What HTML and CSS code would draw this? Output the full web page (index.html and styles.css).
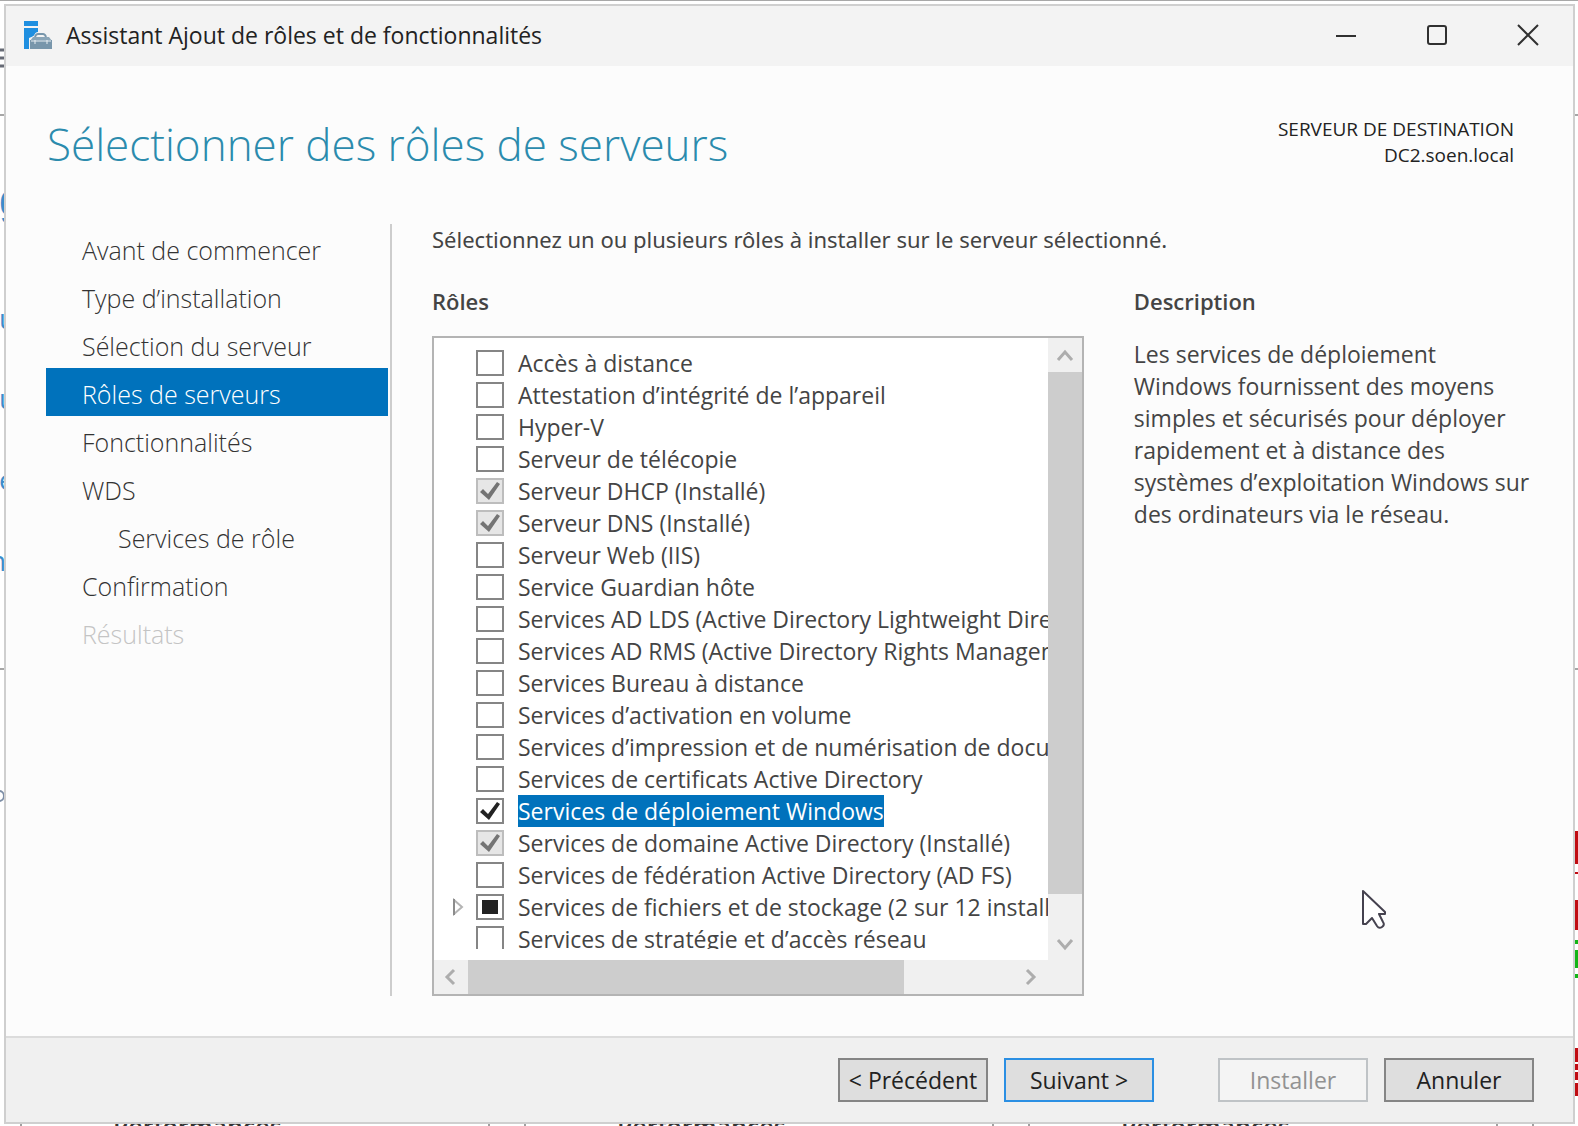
FILE: index.html
```html
<!DOCTYPE html>
<html lang="fr">
<head>
<meta charset="utf-8">
<meta name="viewport" content="width=device-width, initial-scale=1">
<title>Assistant Ajout de rôles et de fonctionnalités</title>
<link rel="stylesheet" href="styles.css">
</head>
<body>
<div class="backdrop" aria-hidden="true">
  <svg class="edge edge-left" width="8" height="820" viewBox="0 0 8 820">
    <path d="M0 50h8M0 58h8M0 66h8" stroke="#666a75" stroke-width="3"/>
    <path d="M0 115h8M0 669h8" stroke="#a6a6a6" stroke-width="2"/>
    <circle cx="-1" cy="796" r="5" fill="none" stroke="#7d8ea6" stroke-width="2"/>
  </svg>
  <span class="peek peek-1">g</span>
  <span class="peek peek-2">u</span>
  <span class="peek peek-3">u</span>
  <span class="peek peek-4">e</span>
  <span class="peek peek-5">n</span>
  <svg class="edge edge-right" width="4" height="1110" viewBox="0 0 4 1110">
    <path d="M0 115h4M0 669h4" stroke="#a6a6a6" stroke-width="2"/>
    <path d="M0 831h4v33H0zM0 872h4v2H0zM0 900h4v30H0zM0 1048h4v14H0zM0 1064h4v6H0zM0 1072h4v8H0zM0 1083h4v13H0z" fill="#c00c12"/>
    <path d="M0 940h4v4H0zM0 950h4v18H0zM0 974h4v4H0z" fill="#13b516"/>
  </svg>
  <div class="tiles">
    <div class="tile">Performances</div>
    <div class="tile">Performances</div>
    <div class="tile">Performances</div>
    <div class="tile"></div>
  </div>
</div>

<div class="window">
  <header class="titlebar">
    <svg class="app-icon" width="30" height="30" viewBox="0 0 30 30">
      <path d="M1 1h14v5H1zM1 8h14v4l-7 6v11H1z" fill="#1f8fe0"/>
      <path d="M6 29V18l5-2q1-4 4-4h5q3 0 4 4l5 2v11z" fill="#f3f3f3"/>
      <path d="M12 17q1-3 3-3h5q2 0 3 3" fill="none" stroke="#7896ab" stroke-width="2"/>
      <path d="M10 17h16l3 4H7z" fill="#8aa5b7"/>
      <path d="M7 20h22v9H7z" fill="#7896ab"/>
      <path d="M8 21h20M12 20v4M24 20v4" fill="none" stroke="#e8eef2" stroke-width="1"/>
    </svg>
    <span class="window-title">Assistant Ajout de rôles et de fonctionnalités</span>
    <div class="window-controls">
      <button type="button" aria-label="Réduire"><svg width="22" height="22" viewBox="0 0 22 22"><path d="M1 12h20"/></svg></button>
      <button type="button" aria-label="Agrandir"><svg width="22" height="22" viewBox="0 0 22 22"><rect x="2" y="2" width="18" height="18" rx="2"/></svg></button>
      <button type="button" aria-label="Fermer"><svg width="22" height="22" viewBox="0 0 22 22"><path d="M1 1l20 20M21 1L1 21"/></svg></button>
    </div>
  </header>

  <div class="page-head">
    <h1>Sélectionner des rôles de serveurs</h1>
    <p class="destination">SERVEUR DE DESTINATION<br>DC2.soen.local</p>
  </div>

  <main class="body">
    <nav class="steps">
      <a href="#">Avant de commencer</a>
      <a href="#">Type d’installation</a>
      <a href="#">Sélection du serveur</a>
      <a href="#" class="current" aria-current="step">Rôles de serveurs</a>
      <a href="#">Fonctionnalités</a>
      <a href="#">WDS</a>
      <a href="#" class="sub">Services de rôle</a>
      <a href="#">Confirmation</a>
      <a class="off" aria-disabled="true">Résultats</a>
    </nav>

    <div class="content">
      <p class="intro">Sélectionnez un ou plusieurs rôles à installer sur le serveur sélectionné.</p>
      <div class="columns">
        <section class="roles">
          <h2>Rôles</h2>
          <div class="listbox">
            <div class="viewport">
              <ul class="tree">
                <li><input type="checkbox" id="r1"><label for="r1">Accès à distance</label></li>
                <li><input type="checkbox" id="r2"><label for="r2">Attestation d’intégrité de l’appareil</label></li>
                <li><input type="checkbox" id="r3"><label for="r3">Hyper-V</label></li>
                <li><input type="checkbox" id="r4"><label for="r4">Serveur de télécopie</label></li>
                <li><input type="checkbox" id="r5" checked disabled><label for="r5">Serveur DHCP (Installé)</label></li>
                <li><input type="checkbox" id="r6" checked disabled><label for="r6">Serveur DNS (Installé)</label></li>
                <li><input type="checkbox" id="r7"><label for="r7">Serveur Web (IIS)</label></li>
                <li><input type="checkbox" id="r8"><label for="r8">Service Guardian hôte</label></li>
                <li><input type="checkbox" id="r9"><label for="r9">Services AD LDS (Active Directory Lightweight Directory Services)</label></li>
                <li><input type="checkbox" id="r10"><label for="r10">Services AD RMS (Active Directory Rights Management Services)</label></li>
                <li><input type="checkbox" id="r11"><label for="r11">Services Bureau à distance</label></li>
                <li><input type="checkbox" id="r12"><label for="r12">Services d’activation en volume</label></li>
                <li><input type="checkbox" id="r13"><label for="r13">Services d’impression et de numérisation de documents</label></li>
                <li><input type="checkbox" id="r14"><label for="r14">Services de certificats Active Directory</label></li>
                <li><input type="checkbox" id="r15" checked><label for="r15" class="selected">Services de déploiement Windows</label></li>
                <li><input type="checkbox" id="r16" checked disabled><label for="r16">Services de domaine Active Directory (Installé)</label></li>
                <li><input type="checkbox" id="r17"><label for="r17">Services de fédération Active Directory (AD FS)</label></li>
                <li class="branch"><svg class="expander" width="12" height="18" viewBox="0 0 12 18"><path d="M2 2l8 7-8 7z" fill="#fff" stroke="#b4b4b4" stroke-width="2"/><path d="M2 1v16" stroke="#8c8c8c" stroke-width="2"/></svg><input type="checkbox" id="r18" class="partial"><label for="r18">Services de fichiers et de stockage (2 sur 12 installés)</label></li>
                <li><input type="checkbox" id="r19"><label for="r19">Services de stratégie et d’accès réseau</label></li>
              </ul>
            </div>
            <div class="scroll-v">
              <svg width="34" height="34" viewBox="0 0 34 34"><path d="M10 22l7-8 7 8"/></svg>
              <span class="thumb"></span>
              <svg width="34" height="34" viewBox="0 0 34 34"><path d="M10 14l7 8 7-8"/></svg>
            </div>
            <div class="scroll-h">
              <svg width="34" height="34" viewBox="0 0 34 34"><path d="M20 10l-7 7 7 7"/></svg>
              <span class="thumb"></span>
              <svg width="34" height="34" viewBox="0 0 34 34"><path d="M13 10l7 7-7 7"/></svg>
            </div>
          </div>
        </section>
        <section class="description">
          <h2>Description</h2>
          <p>Les services de déploiement Windows fournissent des moyens simples et sécurisés pour déployer rapidement et à distance des systèmes d’exploitation Windows sur des ordinateurs via le réseau.</p>
        </section>
      </div>
    </div>
  </main>

  <footer class="actions">
    <button type="button">&lt; Précédent</button>
    <button type="button" class="default">Suivant &gt;</button>
    <button type="button" class="apart" disabled>Installer</button>
    <button type="button">Annuler</button>
  </footer>
</div>

<svg class="pointer" width="28" height="42" viewBox="0 0 28 42" aria-hidden="true">
  <path d="M2 2v33l3 0 6-6 5 8q2 3 5 1t1-5l-4-8h6v-2z" fill="#fff" stroke="#45424f" stroke-width="2" stroke-linejoin="round"/>
</svg>
</body>
</html>
```
FILE: styles.css
```css
* {
  box-sizing: border-box;
}

body {
  margin: 0;
  height: 100vh;
  min-height: 720px;
  padding: 3px 3px 2px 4px;
  border-top: 1px solid #a8a8a8;
  background: #fff;
  color: #444;
  font-family: "Open Sans", "Noto Sans", sans-serif;
  font-size: 23px;
  line-height: 32px;
  position: relative;
  overflow: hidden;
}

h1,
h2,
p,
ul {
  margin: 0;
  padding: 0;
}

button {
  font: inherit;
  color: inherit;
}

/* Parts of the console visible around the dialog */
.backdrop {
  position: absolute;
  inset: -1px 0 0;
  overflow: hidden;
}

.edge {
  position: absolute;
  top: 0;
}

.edge-left {
  left: 0;
}

.edge-right {
  right: 0;
}

.peek {
  position: absolute;
  left: -1px;
  color: #3b8ccb;
  font-size: 28px;
  line-height: 40px;
}

.peek-1 {
  top: 180px;
  font-family: "Liberation Sans", sans-serif;
  font-size: 44px;
}

.peek-2 {
  top: 298px;
}

.peek-3 {
  top: 378px;
}

.peek-4 {
  top: 459px;
}

.peek-5 {
  top: 540px;
  left: -11px;
}

.tiles {
  position: absolute;
  left: 20px;
  bottom: -16px;
  display: grid;
  grid-template-columns: repeat(4, 470px);
  gap: 34px;
}

.tile {
  border: solid #a0a0a0;
  border-width: 0 2px;
  padding-left: 91px;
  height: 32px;
  color: #333;
  font-size: 25px;
  font-weight: 600;
}

/* Dialog window */
.window {
  position: relative;
  height: 100%;
  display: flex;
  flex-direction: column;
  border: 2px solid #cfcfcf;
  background: #fcfcfc;
}

.titlebar {
  display: flex;
  align-items: center;
  height: 60px;
  padding: 0 0 2px 17px;
  background: #f3f3f3;
  color: #222;
}

.window-title {
  flex: 1;
  margin-left: 13px;
}

.window-controls {
  display: flex;
}

.window-controls button {
  display: flex;
  justify-content: center;
  width: 91px;
  padding: 0;
  border: 0;
  background: none;
}

.window-controls svg {
  fill: none;
  stroke: #303030;
  stroke-width: 2;
}

.page-head {
  display: flex;
  justify-content: space-between;
  align-items: flex-start;
  height: 158px;
  padding: 46px 59px 0 41px;
}

h1 {
  color: #2b8bad;
  font-size: 44px;
  font-weight: 300;
  line-height: 64px;
}

.destination {
  margin-top: 4px;
  color: #222;
  font-size: 19px;
  line-height: 26px;
  text-align: right;
}

.body {
  flex: 1;
  min-height: 0;
  display: flex;
  padding: 0 38px 40px 40px;
}

.steps {
  flex: none;
  width: 346px;
  padding-right: 2px;
  border-right: 2px solid #cdcdcd;
  font-size: 25px;
  font-weight: 300;
  line-height: 44px;
}

.steps a {
  display: block;
  padding: 4px 0 0 36px;
  color: #333;
  text-decoration: none;
}

.steps .sub {
  padding-left: 72px;
}

.steps .current {
  background: #0072bc;
  color: #fff;
}

.steps .off {
  color: #c4c4c4;
}

.content {
  flex: 1;
  min-width: 0;
  display: flex;
  flex-direction: column;
  padding-left: 40px;
}

.intro {
  font-family: "Noto Sans", sans-serif;
  font-size: 22px;
  line-height: 30px;
}

.columns {
  flex: 1;
  min-height: 0;
  display: grid;
  grid-template-columns: minmax(0, 13fr) minmax(0, 8fr);
  gap: 50px;
  margin-top: 32px;
}

h2 {
  font-size: 22px;
  font-weight: 600;
  line-height: 30px;
}

.roles {
  display: flex;
  flex-direction: column;
  min-height: 0;
}

.description p {
  margin-top: 22px;
}

.listbox {
  flex: 1;
  min-height: 0;
  margin-top: 20px;
  display: grid;
  grid-template: minmax(0, 1fr) 34px / minmax(0, 1fr) 34px;
  border: 2px solid #b4b4b4;
  background: #fff;
}

.viewport {
  padding: 9px 0 11px;
  min-height: 0;
}

.tree {
  height: 100%;
  overflow: hidden;
  list-style: none;
}

.tree li {
  display: flex;
  align-items: center;
  padding-left: 42px;
  height: 32px;
  white-space: nowrap;
}

.tree .branch {
  padding-left: 18px;
}

.expander {
  flex: none;
  margin-right: 12px;
}

.tree input {
  appearance: none;
  flex: none;
  width: 28px;
  height: 26px;
  margin: 0 14px 0 0;
  border: 2px solid #858585;
  background: #fff;
}

.tree input:checked::before {
  content: "";
  display: block;
  width: 24px;
  height: 22px;
  background: #222;
  clip-path: polygon(2px 12px, 5px 9px, 10px 14px, 19px 2px, 22px 4px, 11px 20px);
}

.tree input:disabled {
  border-color: #bdbdbd;
  background: #e6e6e6;
}

.tree input:disabled::before {
  background: #747474;
}

.tree .partial::before {
  content: "";
  display: block;
  width: 16px;
  height: 14px;
  margin: 4px;
  background: #222;
}

.tree .selected {
  background: #0072bc;
  color: #fff;
}

.scroll-v,
.scroll-h {
  display: flex;
  background: #f0f0f0;
}

.scroll-v {
  flex-direction: column;
}

.scroll-h {
  grid-column: 1 / -1;
  padding-right: 34px;
}

.scroll-v svg,
.scroll-h svg {
  flex: none;
  fill: none;
  stroke: #adadad;
  stroke-width: 3;
}

.thumb {
  background: #cdcdcd;
}

.scroll-v .thumb {
  height: 84%;
  margin-bottom: auto;
}

.scroll-h .thumb {
  width: 71%;
  margin-right: auto;
}

.actions {
  display: flex;
  justify-content: flex-end;
  align-items: flex-start;
  gap: 16px;
  padding: 20px 39px;
  border-top: 2px solid #dcdcdc;
  background: #f0f0f0;
}

.actions button {
  width: 150px;
  height: 44px;
  padding: 0;
  border: 2px solid #858585;
  background: #dedede;
  color: #222;
  white-space: nowrap;
}

.actions .default {
  border-color: #2b8fe3;
}

.actions .apart {
  margin-left: 48px;
}

.actions button:disabled {
  border-color: #bfc3c6;
  background: #f4f4f4;
  color: #929292;
}

/* Mouse pointer drawn over the dialog */
.pointer {
  position: absolute;
  left: 1361px;
  top: 888px;
}
```
